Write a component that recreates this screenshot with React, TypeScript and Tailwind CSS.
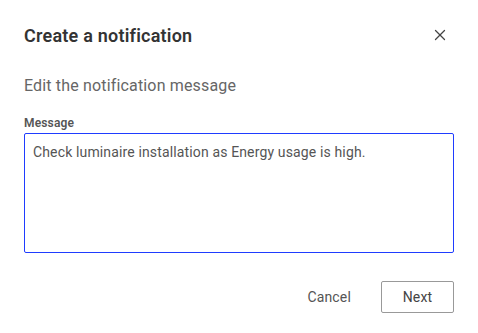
import { X } from 'lucide-react';

export default function App() {
  return (
    <div className="w-[478px] h-[333px] bg-white px-6 pt-6 font-['Roboto',sans-serif] tracking-[0.01em]">
      {/* header */}
      <div className="flex justify-between">
        <h2 className="text-[18px] leading-6 font-semibold text-[#333] tracking-[0.012em]">Create a notification</h2>
        <button className="w-6 h-6 -mt-[1.5px] mr-[2.5px] flex items-center justify-center text-[#444]">
          <X size={18} strokeWidth={1.7} />
        </button>
      </div>

      <p className="mt-[25.5px] text-base leading-6 text-[#666]">Edit the notification message</p>

      <label className="block mt-[17.5px] text-xs leading-4 font-semibold text-[#555]">Message</label>
      <textarea
        className="mt-[2px] block w-full h-[120px] resize-none rounded-[2px] border border-[#1f3cff] px-2 py-2 text-sm leading-5 tracking-[0.01em] text-[#555] outline-none"
        defaultValue="Check luminaire installation as Energy usage is high."
      />

      {/* footer */}
      <div className="mt-[28px] flex justify-end gap-[14px]">
        <button className="h-8 px-4 text-sm text-[#555]">Cancel</button>
        <button className="h-8 w-[73px] rounded-[2px] border border-[#999] text-sm text-[#444]">Next</button>
      </div>
    </div>
  );
}
